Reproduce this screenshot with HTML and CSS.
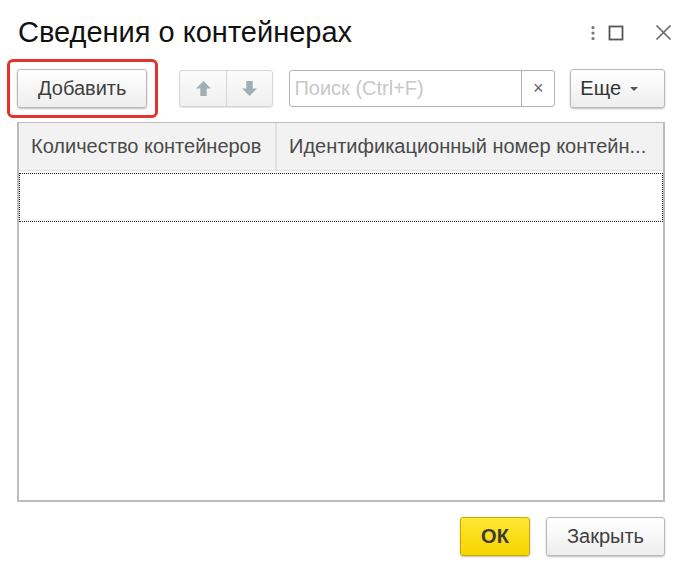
FILE: index.html
```html
<!DOCTYPE html>
<html lang="ru">
<head>
    <meta charset="UTF-8">
    <title>Сведения о контейнерах</title>
    <link rel="stylesheet" href="styles.css">
</head>
<body>
    <div class="window">
        <!-- Title -->
        <div class="titlebar">
            <h1 class="title">Сведения о контейнерах</h1>
            <div class="win-buttons">
                <svg class="win-icon kebab" width="6" height="16" viewBox="0 0 6 16">
                    <circle cx="3" cy="2.5" r="1.6" fill="#777"/>
                    <circle cx="3" cy="8" r="1.6" fill="#777"/>
                    <circle cx="3" cy="13.5" r="1.6" fill="#777"/>
                </svg>
                <svg class="win-icon" width="16" height="16" viewBox="0 0 16 16">
                    <rect x="1.5" y="1.5" width="13" height="13" fill="none" stroke="#555" stroke-width="1.8"/>
                </svg>
                <svg class="win-icon" width="17" height="17" viewBox="0 0 17 17">
                    <path d="M1.5 1.5 L15.5 15.5 M15.5 1.5 L1.5 15.5" stroke="#666" stroke-width="1.6"/>
                </svg>
            </div>
        </div>

        <!-- Toolbar -->
        <div class="toolbar">
            <button class="btn btn-add">Добавить</button>
            <div class="arrows">
                <span class="arrow-btn">
                    <svg width="17" height="17" viewBox="0 0 16 16">
                        <path d="M8 1 L15 8 L11 8 L11 15 L5 15 L5 8 L1 8 Z" fill="#a2aeb5"/>
                    </svg>
                </span>
                <span class="arrow-btn">
                    <svg width="17" height="17" viewBox="0 0 16 16">
                        <path d="M8 15 L15 8 L11 8 L11 1 L5 1 L5 8 L1 8 Z" fill="#a2aeb5"/>
                    </svg>
                </span>
            </div>
            <div class="search">
                <span class="search-input">Поиск (Ctrl+F)</span>
                <span class="search-clear">&times;</span>
            </div>
            <button class="btn btn-more">Еще <span class="caret"></span></button>
        </div>

        <!-- Table -->
        <div class="grid">
            <div class="grid-head">
                <div class="col col-1">Количество контейнеров</div>
                <div class="col col-2">Идентификационный номер контейн...</div>
            </div>
            <div class="grid-row"></div>
        </div>

        <!-- Footer -->
        <div class="footer">
            <button class="btn btn-ok">ОК</button>
            <button class="btn btn-close">Закрыть</button>
        </div>
    </div>
</body>
</html>
```

FILE: styles.css
```css
* {
    margin: 0;
    padding: 0;
    box-sizing: border-box;
    font-family: 'Liberation Sans', Arial, sans-serif;
}

body {
    background: white;
    width: 695px;
    height: 577px;
    overflow: hidden;
}

.window {
    padding: 0 30px 0 17px;
}

/* Title bar */
.titlebar {
    display: flex;
    align-items: center;
    justify-content: space-between;
    height: 66px;
    padding-left: 1px;
    padding-bottom: 1px;
}

.title {
    font-size: 29px;
    font-weight: normal;
    color: #111;
}

.win-buttons {
    display: flex;
    align-items: center;
    gap: 31px;
    margin-right: -7px;
}

.win-icon {
    display: block;
}

.kebab {
    margin-right: -19px;
}

/* Toolbar */
.toolbar {
    display: flex;
    align-items: center;
    height: 40px;
    margin-top: 2px;
}

.btn {
    height: 39px;
    border: 1px solid #b9b9b9;
    border-radius: 3px;
    background: linear-gradient(#ffffff, #eeeeee);
    box-shadow: 0 1px 2px rgba(0,0,0,0.25);
    font-size: 20px;
    color: #404040;
    cursor: pointer;
}

.btn-add {
    width: 131px;
    position: relative;
}

/* red highlight frame drawn over the screenshot */
.btn-add::after {
    content: '';
    position: absolute;
    left: -11px;
    top: -11px;
    right: -12px;
    bottom: -11px;
    border: 3px solid #e3342b;
    border-radius: 6px;
}

.arrows {
    display: flex;
    margin-left: 32px;
    height: 37px;
    border: 1px solid #d6d6d6;
    border-radius: 3px;
    background: linear-gradient(#fbfbfb, #f0f0f0);
    box-shadow: 0 1px 1px rgba(0,0,0,0.12);
}

.arrow-btn {
    width: 46px;
    display: flex;
    align-items: center;
    justify-content: center;
}

.arrow-btn + .arrow-btn {
    border-left: 1px solid #d6d6d6;
}

.search {
    display: flex;
    margin-left: 16px;
    width: 267px;
    height: 37px;
    border: 1px solid #b3b3b3;
    border-radius: 3px;
    background: white;
}

.search-input {
    flex: 1;
    padding-left: 4px;
    font-size: 20px;
    line-height: 35px;
    color: #c8c8c8;
}

.search-clear {
    width: 33px;
    border-left: 1px solid #b3b3b3;
    text-align: center;
    font-size: 18px;
    line-height: 35px;
    color: #666;
}

.btn-more {
    margin-left: 15px;
    width: 95px;
    padding-left: 9px;
    text-align: left;
    color: #333;
    font-size: 20px;
}

.caret {
    display: inline-block;
    vertical-align: middle;
    margin-left: 3px;
    border-left: 4px solid transparent;
    border-right: 4px solid transparent;
    border-top: 4px solid #555;
}

/* Table */
.grid {
    margin-top: 14px;
    width: 648px;
    height: 380px;
    border: 2px solid #bdbdbd;
    border-top-width: 1px;
    border-bottom-width: 2px;
}

.grid-head {
    display: flex;
    height: 48px;
    background: #f2f2f2;
    border-bottom: 1px solid #e2e2e2;
}

.col {
    font-size: 20px;
    color: #4a4a4a;
    line-height: 47px;
    padding-left: 12px;
    white-space: nowrap;
    overflow: hidden;
}

.col-1 {
    width: 258px;
    border-right: 2px solid #dedede;
}

.col-2 {
    flex: 1;
}

.grid-row {
    height: 49px;
    margin-top: 2px;
    border: 1px dotted #222;
}

/* Footer */
.footer {
    display: flex;
    justify-content: flex-end;
    gap: 16px;
    margin-top: 15px;
    width: 648px;
}

.btn-ok {
    width: 70px;
    border-color: #c9aa00;
    background: linear-gradient(#ffe733, #f6d400);
    font-weight: bold;
    color: #3a3a3a;
}

.btn-close {
    width: 119px;
}
```
